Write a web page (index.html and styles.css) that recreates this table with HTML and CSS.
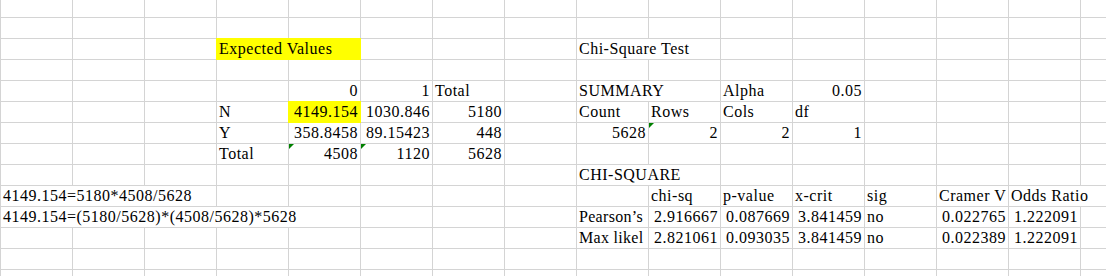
FILE: index.html
```html
<!DOCTYPE html>
<html>
<head>
<meta charset="utf-8">
<title>Expected Values / Chi-Square Test</title>
<link rel="stylesheet" href="styles.css">
</head>
<body>
<div class="sheet">
  <div class="cell r2 c3 s2 hl">Expected Values</div>
  <div class="cell r2 c8 s2 ov">Chi-Square Test</div>

  <div class="cell r4 c4 num">0</div>
  <div class="cell r4 c5 num">1</div>
  <div class="cell r4 c6">Total</div>
  <div class="cell r4 c8 s2 ov">SUMMARY</div>
  <div class="cell r4 c10">Alpha</div>
  <div class="cell r4 c11 num">0.05</div>

  <div class="cell r5 c3">N</div>
  <div class="cell r5 c4 num hl">4149.154</div>
  <div class="cell r5 c5 num">1030.846</div>
  <div class="cell r5 c6 num">5180</div>
  <div class="cell r5 c8">Count</div>
  <div class="cell r5 c9">Rows</div>
  <div class="cell r5 c10">Cols</div>
  <div class="cell r5 c11">df</div>

  <div class="cell r6 c3">Y</div>
  <div class="cell r6 c4 num">358.8458</div>
  <div class="cell r6 c5 num">89.15423</div>
  <div class="cell r6 c6 num">448</div>
  <div class="cell r6 c8 num">5628</div>
  <div class="cell r6 c9 num flag">2</div>
  <div class="cell r6 c10 num">2</div>
  <div class="cell r6 c11 num">1</div>

  <div class="cell r7 c3">Total</div>
  <div class="cell r7 c4 num flag">4508</div>
  <div class="cell r7 c5 num flag">1120</div>
  <div class="cell r7 c6 num">5628</div>

  <div class="cell r8 c8 s2 ov">CHI-SQUARE</div>

  <div class="cell r9 c0 s3 ov">4149.154=5180*4508/5628</div>
  <div class="cell r9 c9">chi-sq</div>
  <div class="cell r9 c10">p-value</div>
  <div class="cell r9 c11">x-crit</div>
  <div class="cell r9 c12">sig</div>
  <div class="cell r9 c13">Cramer V</div>
  <div class="cell r9 c14 s2 ov">Odds Ratio</div>

  <div class="cell r10 c0 s5 ov">4149.154=(5180/5628)*(4508/5628)*5628</div>
  <div class="cell r10 c8 tight">Pearson’s</div>
  <div class="cell r10 c9 num">2.916667</div>
  <div class="cell r10 c10 num">0.087669</div>
  <div class="cell r10 c11 num">3.841459</div>
  <div class="cell r10 c12">no</div>
  <div class="cell r10 c13 num">0.022765</div>
  <div class="cell r10 c14 num">1.222091</div>

  <div class="cell r11 c8 tight">Max likel</div>
  <div class="cell r11 c9 num">2.821061</div>
  <div class="cell r11 c10 num">0.093035</div>
  <div class="cell r11 c11 num">3.841459</div>
  <div class="cell r11 c12">no</div>
  <div class="cell r11 c13 num">0.022389</div>
  <div class="cell r11 c14 num">1.222091</div>
</div>
</body>
</html>
```
FILE: styles.css
```css
html, body {
  margin: 0;
  padding: 0;
  background: #ffffff;
  overflow: hidden;
}

.sheet {
  display: grid;
  grid-template-columns: repeat(16, 71px);
  grid-template-rows: 17px repeat(13, 20px);
  column-gap: 1px;
  row-gap: 1px;
  padding-left: 1px;
  height: 276px;
  background-color: #ffffff;
  background-image:
    linear-gradient(to right, #d4d4d4 1px, transparent 1px),
    linear-gradient(to bottom, #d4d4d4 1px, transparent 1px);
  background-size: 72px 100%, 100% 21px;
  background-position: 0 0, 0 17px;
  font-family: "Liberation Serif", "Times New Roman", serif;
  font-size: 16px;
  letter-spacing: 0.5px;
  color: #000000;
}

.cell {
  position: relative;
  padding: 0 2px;
  line-height: 20px;
  white-space: nowrap;
  overflow: hidden;
}

.num { text-align: right; }

.tight { letter-spacing: 0.3px; }

.ov { background: #ffffff; }

.hl {
  background: #ffff00;
  box-shadow: 0 0 0 1px #ffff00;
}

.flag::before {
  content: "";
  position: absolute;
  top: 0;
  left: 0;
  width: 0;
  height: 0;
  border-top: 5px solid #008000;
  border-right: 5px solid transparent;
}

.s2 { grid-column-end: span 2; }
.s3 { grid-column-end: span 3; }
.s5 { grid-column-end: span 5; }

.r2 { grid-row: 3; }
.r4 { grid-row: 5; }
.r5 { grid-row: 6; }
.r6 { grid-row: 7; }
.r7 { grid-row: 8; }
.r8 { grid-row: 9; }
.r9 { grid-row: 10; }
.r10 { grid-row: 11; }
.r11 { grid-row: 12; }

.c0 { grid-column-start: 1; }
.c3 { grid-column-start: 4; }
.c4 { grid-column-start: 5; }
.c5 { grid-column-start: 6; }
.c6 { grid-column-start: 7; }
.c8 { grid-column-start: 9; }
.c9 { grid-column-start: 10; }
.c10 { grid-column-start: 11; }
.c11 { grid-column-start: 12; }
.c12 { grid-column-start: 13; }
.c13 { grid-column-start: 14; }
.c14 { grid-column-start: 15; }
```
